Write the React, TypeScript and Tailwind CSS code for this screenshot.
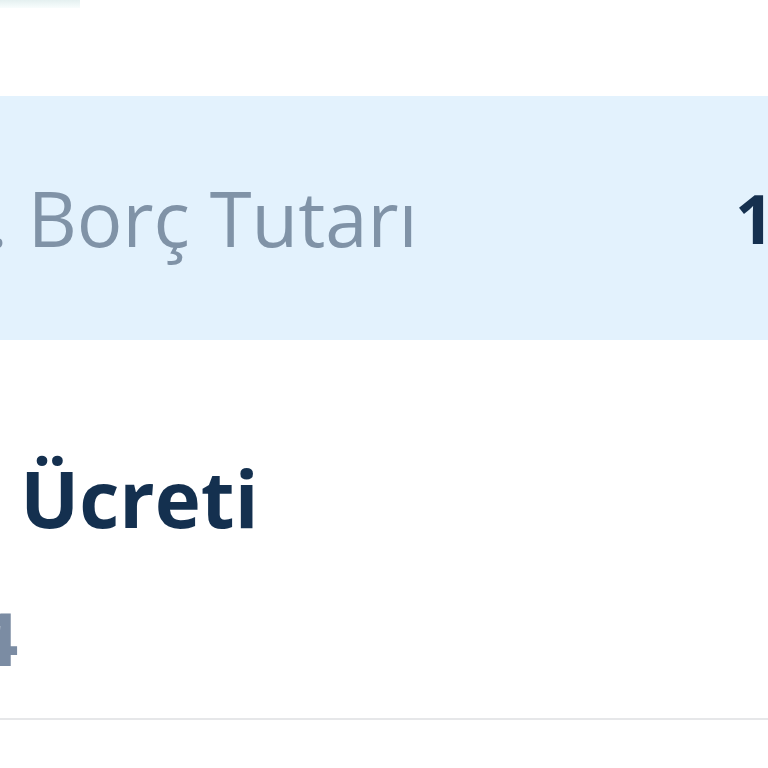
const App = () => {
  return (
    <div
      className="w-[768px] h-[768px] overflow-hidden bg-white"
      style={{ fontFamily: '"Open Sans", "Noto Sans", sans-serif' }}
    >
      {/* ust kosede kalan rozet */}
      <div className="w-[80px] h-[8px] bg-gradient-to-b from-[#e4f0f0] to-[#f8fdfd]" />

      {/* BORC TUTARI */}
      <div className="mt-[88px] h-[244px] bg-[#e3f2fd] flex items-center justify-between">
        <span className="-ml-[12px] text-[76px] leading-none text-[#8093a7] whitespace-nowrap">
          . Borç Tutarı
        </span>
        <span className="-mr-[6px] text-[68px] leading-none font-bold text-[#15304f]">
          1
        </span>
      </div>

      {/* UCRET SATIRI */}
      <div className="pt-[119px] flex flex-col">
        <span className="text-[78px] leading-none font-bold text-[#14304f] whitespace-nowrap">
          {"\u00a0Ücreti"}
        </span>
        <span className="mt-[64px] -ml-[24px] text-[74px] leading-none font-bold text-[#7b8ca3]">
          4
        </span>
        <div className="mt-[43px] h-[2px] bg-[#e6e7e9]" />
      </div>
    </div>
  );
};

export default App;
